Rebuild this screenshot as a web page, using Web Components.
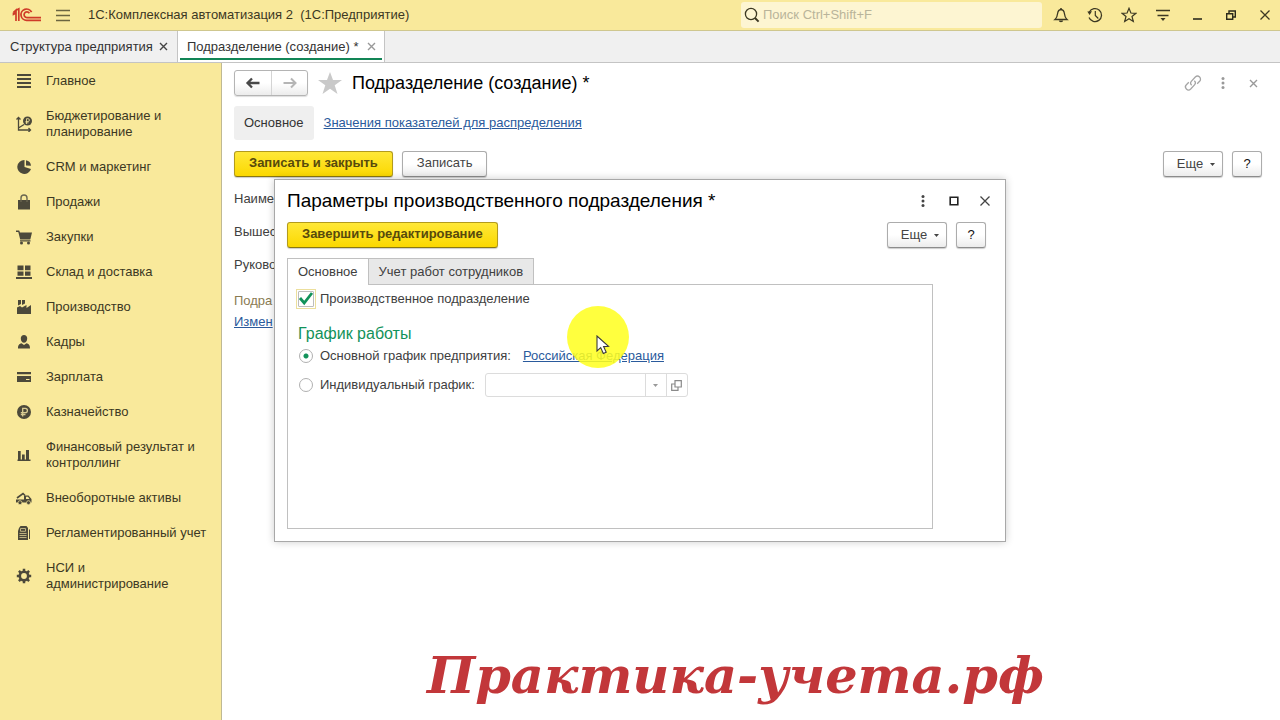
<!DOCTYPE html>
<html lang="ru">
<head>
<meta charset="utf-8">
<title>1С:Комплексная автоматизация 2</title>
<style>
  html, body { margin: 0; height: 100%; }
  body {
    font: 13px/16px "Liberation Sans", Arial, sans-serif;
    color: #404040; background: #fff; overflow: hidden;
    --accent: #f9e99b; --link: #2a5a9c; --green: #12925a; --line: #b8b8b8;
  }
</style>
</head>
<body>
<ka-app></ka-app>
<script>
const ICONS = {
  logo: [30, 16, '<g fill="none" stroke="#cf3b28" stroke-width="1.7"><path d="M1.500 5.500 4 3.200V14M4 3.200 6.800 1.800V14M1.500 5.500v1.800L4 6"/><path d="M19.600 5.200A5.600 5.600 0 1 0 15 13.300h14"/><path d="M17.400 6.200A2.900 2.900 0 1 0 15 10.700h14"/></g>'],
  burger: [16, 14, '<path d="M1 2.500h14M1 7.500h14M1 12.500h14" stroke="#6b6540" stroke-width="1.300"/>'],
  search: [16, 16, '<circle cx="7" cy="7" r="5.600" fill="none" stroke="#3c3823" stroke-width="1.300"/><path d="m11 11 3.600 3.600" stroke="#3c3823" stroke-width="2"/>'],
  bell: [16, 16, '<path d="M2 12.500c2-1.600 2.300-3.200 2.600-6C4.900 4 6 2.700 8 2.500c2 .2 3.100 1.500 3.400 4 .3 2.800.6 4.400 2.600 6z" fill="none" stroke="#3c3823" stroke-width="1.300"/><path d="M8 1v2" stroke="#3c3823" stroke-width="1.500"/><path d="M5.800 13.500h4.400a2.200 1.800 0 0 1-4.400 0z" fill="#3c3823"/>'],
  history: [16, 16, '<path d="M2.300 5A6.500 6.500 0 1 1 2 10.500" fill="none" stroke="#3c3823" stroke-width="1.300"/><path d="M.3 4.500 5 4.200 2.600 8z" fill="#3c3823"/><path d="M8.300 4v4.500l3 3" fill="none" stroke="#3c3823" stroke-width="1.200"/>'],
  starline: [16, 16, '<path d="m8 1.300 1.900 4.700 5 .3-3.900 3.200 1.300 5L8 11.800l-4.300 2.700 1.300-5L1.100 6.300l5-.3z" fill="none" stroke="#3c3823" stroke-width="1.200"/>'],
  service: [16, 16, '<path d="M1 3.500h14M2.500 8.500h11" stroke="#3c3823" stroke-width="1.300"/><path d="M5.500 11h5L8 14z" fill="#3c3823"/>'],
  min: [12, 12, '<path d="M2 10h9" stroke="#2c2a1c" stroke-width="1.600"/>'],
  restore: [12, 12, '<path d="M1.700 4.700h6v5.600h-6zM4 4.200V2h6.300v6H8" fill="none" stroke="#2c2a1c" stroke-width="1.400"/>'],
  cross: [12, 12, '<path d="m1.500 1.500 9 9m0-9-9 9" stroke="currentColor" stroke-width="1.300"/>'],
  tabcross: [9, 9, '<path d="m1 1 7 7m0-7-7 7" stroke="currentColor" stroke-width="1.400"/>'],
  square: [10, 10, '<path d="M1.200 1.200h7.600v7.600H1.200z" fill="none" stroke="#222" stroke-width="1.600"/>'],
  dots: [4, 14, '<g fill="currentColor"><circle cx="2" cy="2.500" r="1.500"/><circle cx="2" cy="7" r="1.500"/><circle cx="2" cy="11.500" r="1.500"/></g>'],
  chain: [18, 18, '<g fill="none" stroke="#a5a5a5" stroke-width="1.300"><path d="M7.700 11.300a3 3 0 0 1-.2-4.200L11.300 3a3 3 0 0 1 4.300 4.300l-2.400 2.500"/><path d="M10.300 6.700a3 3 0 0 1 .2 4.200L6.700 15a3 3 0 0 1-4.300-4.300l2.400-2.500"/></g>'],
  back: [16, 12, '<path d="M7 1.500 2.500 6 7 10.500M3 6h11.500" fill="none" stroke="#484848" stroke-width="2.300"/>'],
  forward: [16, 12, '<path d="M9 1.500 13.500 6 9 10.500M13 6H1.500" fill="none" stroke="#b5b5b5" stroke-width="2"/>'],
  star: [24, 22, '<path d="m12 0 3 8h9l-7.300 5.200L19.500 22 12 16.700 4.500 22l2.800-8.800L0 8h9z" fill="#c9c9c9"/>'],
  caret: [5, 3, '<path d="M0 0h5L2.500 3z" fill="currentColor"/>'],
  open: [11, 11, '<path d="M4 .7h6.300V7H4zM4 4H.7v6.300H7V7" fill="none" stroke="#8a8a8a" stroke-width="1.200"/>'],
  check: [16, 16, '<path d="m2 7 4.200 5L14 2" fill="none" stroke="#12925a" stroke-width="2.800"/>'],
  cursor: [14, 20, '<path d="M1 1v15l3.700-3.400 2.600 5.900 2.900-1.300-2.600-5.600 4.900-.3z" fill="#fff" stroke="#3a3a3a" stroke-width="1.100"/>'],
  main: [16, 16, '<path d="M1 2h14M1 6h14M1 10h14M1 14h14" stroke="#4c493a" stroke-width="2"/>'],
  budget: [16, 16, '<g fill="none" stroke="#4c493a" stroke-width="1.300"><path d="M2.500 1.500V14H14M.5 3.500l2-2 2 2M12.500 12l2 2-2 2M2.500 12 8 8.500"/></g><circle cx="11.500" cy="5" r="4.500" fill="#4c493a"/><path d="M10.500 8V2.700h1.500a1.400 1.400 0 0 1 0 2.800H9.500M9.500 6.800h3" fill="none" stroke="#f9e99b" stroke-width=".8"/>'],
  pie: [16, 16, '<path d="M8.500 8V1A7 7 0 1 0 15 10z" fill="#4c493a"/><path d="M10 6.500V1.200a6 6 0 0 1 5 5.500z" fill="#4c493a"/>'],
  bag: [16, 16, '<path d="M2 6h12v9.500H2z" fill="#4c493a"/><path d="M5 8V4a3 3 0 0 1 6 0v4" fill="none" stroke="#6b6750" stroke-width="1.400"/>'],
  cart: [16, 16, '<path d="M0 1.500h3.200L4 3.500h12l-1.700 7H4.200L2.300 3H0zM4 11.200h10.500v1.300H4z" fill="#4c493a"/><circle cx="5.500" cy="14" r="1.500" fill="#4c493a"/><circle cx="12.500" cy="14" r="1.500" fill="#4c493a"/>'],
  stock: [16, 16, '<path d="M1.500 1.500h6v4.700h-6zm7.500 0h5.500v4.700H9zM1.500 7.500h6v4.200h-6zm7.500 0h5.500v4.200H9zM0 13h16v2H0z" fill="#4c493a"/>'],
  factory: [16, 16, '<path d="M1 15V8.500l3-1.500 2 1.500L10.500 6v3L15 6v9zM2 1h3v4L2 6.500zM6 1h3v3.500L6 6z" fill="#4c493a"/>'],
  person: [16, 16, '<path d="M8 1a3.200 3.200 0 0 1 3.200 3.500C11.200 7 9.800 8.700 8 8.700S4.800 7 4.800 4.500A3.200 3.200 0 0 1 8 1zM2 14.500C2 11 3 10 5.500 9.200L8 11l2.500-1.800C13 10 14 11 14 14.500z" fill="#4c493a"/>'],
  card: [16, 16, '<path d="M1 3h14v2.300H1zM1 7h14v6H1z" fill="#4c493a"/><path d="M10 10.500h3.500" stroke="#f9e99b"/>'],
  ruble: [16, 16, '<circle cx="8" cy="8" r="7" fill="#4c493a"/><path d="M6.700 12.500V4.300h2.500a2.200 2.200 0 0 1 0 4.400H4.800M4.800 10.500h4.700" fill="none" stroke="#d9cc92" stroke-width="1.300"/>'],
  bars: [16, 16, '<path d="M2 4h2.700v9H2zM6 7.500h2.700V13H6zM10 3h3v10h-3zM1.500 12.500h13V14h-13z" fill="#4c493a"/>'],
  truck: [16, 16, '<path d="M0 9.500h8V5.500h4.500L15.500 9v3.500H0z" fill="#4c493a"/><path d="M10 6.700h2L13.500 9H10z" fill="#f9e99b"/><path d="m1 8 6-4.500 2 2" fill="none" stroke="#4c493a" stroke-width="1.600"/><g fill="#4c493a" stroke="#f9e99b" stroke-width=".7"><circle cx="4" cy="12.700" r="2"/><circle cx="12.500" cy="12.700" r="2"/></g>'],
  calc: [16, 16, '<path d="M3 3 4.500 1h6L12 3v12H2V6zM13 4.500h1V14h-1z" fill="#4c493a"/><path d="M4.500 3.500h5v2.800h-5zM3.500 8.500h7M3.500 10.500h7M3.500 12.500h7" fill="none" stroke="#d9cc92" stroke-width=".8"/>'],
  gear: [16, 16, '<circle cx="8" cy="8" r="4.200" fill="none" stroke="#4c493a" stroke-width="2.600"/><path d="M8 .8v2.700M8 12.500v2.700M.8 8h2.700M12.500 8h2.700M2.900 2.900l1.900 1.900M11.200 11.200l1.900 1.900M2.900 13.100l1.900-1.900M11.200 4.800l1.900-1.900" stroke="#4c493a" stroke-width="2.500"/>']
};

function define(name, html, setup) {
  const t = document.createElement('template');
  t.innerHTML = html;
  customElements.define(name, class extends HTMLElement {
    constructor() {
      super();
      this.attachShadow({ mode: 'open' }).append(t.content.cloneNode(true));
    }
    connectedCallback() {
      if (setup && !this.ready) { this.ready = true; setup(this, this.shadowRoot); }
    }
  });
}

/* Puts the host's icon in the place marked in its shadow root */
function placeIcon(el, root) {
  const icon = document.createElement('ka-icon');
  icon.setAttribute('name', el.getAttribute('icon'));
  root.querySelector('i').replaceWith(icon);
}

define('ka-icon', `<style>:host{display:inline-flex;flex:none}svg{display:block}</style>`, (el, root) => {
  const [w, h, body] = ICONS[el.getAttribute('name')];
  root.innerHTML += `<svg width="${w}" height="${h}" viewBox="0 0 ${w} ${h}" aria-hidden="true">${body}</svg>`;
});

/* Small frameless button that holds one icon */
define('ka-tool', `<style>
  :host{display:inline-flex;flex:none;color:#3c3823}
  button{display:flex;align-items:center;justify-content:center;width:20px;height:20px;padding:0;border:0;background:none;color:inherit}
</style><button type="button"><i></i></button>`, (el, root) => {
  root.querySelector('button').setAttribute('aria-label', el.getAttribute('label'));
  placeIcon(el, root);
});

define('ka-button', `<style>
  :host{display:inline-flex;flex:none}
  button{height:26px;padding:0 14px 2px;display:flex;align-items:center;justify-content:center;gap:7px;font:inherit;color:#444;
    border:1px solid #acacac;border-bottom-color:#8c8c8c;border-radius:3px;background:linear-gradient(#fff 50%,#ececec);box-shadow:0 1px 1px #0003}
  :host([primary]) button{font-weight:bold;color:#574a0c;border-color:#b39b1c;border-bottom-color:#8a7810;background:linear-gradient(#ffe838,#fbd800)}
  :host([square]) button{width:30px;padding:0;color:#111}
  :host([menu]) button{width:60px;padding:0 0 0 6px}
</style><button type="button"><slot></slot></button>`);

define('ka-titlebar', `<style>
  :host{display:flex;align-items:center;height:30px;padding:0 5px 0 12px;background:var(--accent);border-bottom:1px solid #cfc78f;color:#3c3823}
  .burger{margin-left:11px}
  .name{margin-left:15px;white-space:pre;flex:1}
  .search{display:flex;align-items:center;gap:3px;box-sizing:border-box;width:301px;height:26px;padding:0 3px;border-radius:3px;background:#fdf5d2}
  input{flex:1;min-width:0;border:0;padding:0;background:none;font:inherit;outline:0}
  input::placeholder{color:#b9b49a;opacity:1}
  .tools{display:flex;gap:14px;margin-left:9px}
</style>
<ka-icon name="logo"></ka-icon><ka-tool class="burger" icon="burger" label="Меню"></ka-tool>
<span class="name">1С:Комплексная автоматизация 2  (1С:Предприятие)</span>
<label class="search"><ka-icon name="search"></ka-icon><input type="text" aria-label="Поиск" placeholder="Поиск Ctrl+Shift+F"></label>
<div class="tools"><ka-tool icon="bell" label="Уведомления"></ka-tool><ka-tool icon="history" label="История"></ka-tool><ka-tool icon="starline" label="Избранное"></ka-tool><ka-tool icon="service" label="Сервис"></ka-tool><ka-tool icon="min" label="Свернуть"></ka-tool><ka-tool icon="restore" label="Восстановить"></ka-tool><ka-tool icon="cross" label="Закрыть"></ka-tool></div>`);

define('ka-tabs', `<style>
  :host{display:flex;height:31px;background:#f0f0f0;border-bottom:1px solid #c4c4c4}
  .tab{display:flex;align-items:center;gap:1px;padding:0 3px 0 10px;border-right:1px solid #c4c4c4}
  .tab ka-tool{color:#444}
  button.t{border:0;background:none;padding:0;font:inherit;color:#333}
  .active{gap:3px;padding:0 2px 0 9px;background:linear-gradient(#128556,#128556) 2px 27px/calc(100% - 4px) 2px no-repeat #fff}
  .active ka-tool{color:#999}
</style>
<div class="tab"><button class="t">Структура предприятия</button><ka-tool icon="tabcross" label="Закрыть вкладку"></ka-tool></div>
<div class="tab active"><button class="t">Подразделение (создание) *</button><ka-tool icon="tabcross" label="Закрыть вкладку"></ka-tool></div>`);

define('ka-nav-item', `<style>
  :host{display:block}
  a{display:flex;align-items:center;gap:14px;color:#3c3823;text-decoration:none}
</style><a href="#"><i></i><span><slot></slot></span></a>`, placeIcon);

define('ka-sidebar', `<style>
  :host{display:block;background:var(--accent);border-right:1px solid #bfb993}
  nav{display:flex;flex-direction:column;gap:19px;padding:10px 12px 10px 16px}
</style><nav>
<ka-nav-item icon="main">Главное</ka-nav-item>
<ka-nav-item icon="budget">Бюджетирование и планирование</ka-nav-item>
<ka-nav-item icon="pie">CRM и маркетинг</ka-nav-item>
<ka-nav-item icon="bag">Продажи</ka-nav-item>
<ka-nav-item icon="cart">Закупки</ka-nav-item>
<ka-nav-item icon="stock">Склад и доставка</ka-nav-item>
<ka-nav-item icon="factory">Производство</ka-nav-item>
<ka-nav-item icon="person">Кадры</ka-nav-item>
<ka-nav-item icon="card">Зарплата</ka-nav-item>
<ka-nav-item icon="ruble">Казначейство</ka-nav-item>
<ka-nav-item icon="bars">Финансовый результат и контроллинг</ka-nav-item>
<ka-nav-item icon="truck">Внеоборотные активы</ka-nav-item>
<ka-nav-item icon="calc">Регламентированный учет</ka-nav-item>
<ka-nav-item icon="gear">НСИ и<br>администрирование</ka-nav-item>
</nav>`);

define('ka-form', `<style>
  :host{display:block;padding:7px 18px 0 12px}
  .row{display:flex;align-items:center}
  .history{display:flex;box-sizing:border-box;height:26px;border:1px solid #b4b4b4;border-radius:3px;background:linear-gradient(#fff 50%,#ececec);box-shadow:0 1px 1px #0002}
  .history button{width:36px;padding:0;border:0;background:none;display:flex;align-items:center;justify-content:center}
  .history button+button{border-left:1px solid #d4d4d4}
  .fav{margin:0 10px}
  h1{margin:0;flex:1;font:18px/24px "Liberation Sans",Arial,sans-serif;color:#000}
  .tools{display:flex;gap:10px;margin-right:-1px}
  .tools ka-tool{color:#999}
  .sections{gap:10px;margin:10px 0 11px}
  .sections b{padding:9px 10px;border-radius:3px;background:#efefef;font-weight:normal;color:#333}
  a{color:var(--link)}
  .cmd{gap:9px}
  .space{flex:1}
  .fields{display:flex;flex-direction:column;gap:17px;margin:14px 0 20px}
  .sub{display:flex;flex-direction:column;align-items:flex-start;gap:5px}
  .sub span{color:#8a7b52}
</style>
<div class="row"><div class="history"><button aria-label="Назад"><ka-icon name="back"></ka-icon></button><button aria-label="Вперед"><ka-icon name="forward"></ka-icon></button></div>
<ka-icon class="fav" name="star"></ka-icon><h1>Подразделение (создание) *</h1>
<div class="tools"><ka-tool icon="chain" label="Ссылка"></ka-tool><ka-tool icon="dots" label="Меню"></ka-tool><ka-tool icon="tabcross" label="Закрыть"></ka-tool></div></div>
<div class="row sections"><b>Основное</b><a href="#">Значения показателей для распределения</a></div>
<div class="row cmd"><ka-button primary>Записать и закрыть</ka-button><ka-button>Записать</ka-button><span class="space"></span><ka-button menu>Еще <ka-icon name="caret"></ka-icon></ka-button><ka-button square>?</ka-button></div>
<div class="fields"><span>Наиме</span><span>Вышес</span><span>Руково</span></div>
<div class="sub"><span>Подра</span><a href="#">Измен</a></div>`);

define('ka-dialog', `<style>
  :host{display:block;box-sizing:border-box;padding:8px 11px 12px 12px;border:1px solid #a8a8a8;background:#fff;box-shadow:0 0 8px #0003}
  header,.cmd{display:flex;align-items:center}
  h2{margin:0;flex:1;font:19px/26px "Liberation Sans",Arial,sans-serif;color:#000}
  header div{display:flex;gap:11px;margin-right:-1px}
  header ka-tool{color:#444}
  .cmd{gap:9px;margin:8px 8px 10px 0}
  .space{flex:1}
  .tabs{display:flex}
  .tabs button{height:26px;padding:0 10px;border:1px solid #c0c0c0;border-bottom:0;border-left:0;background:#e8e8e8;font:inherit;color:#404040}
  .tabs button.on{height:27px;margin-bottom:-1px;border-left:1px solid #c0c0c0;background:#fff;position:relative}
  .panel{margin-right:61px;box-sizing:border-box;min-height:245px;border:1px solid #c0c0c0;padding:4px 8px}
  .opt{display:flex;align-items:center;height:20px}
  .box{display:grid;place-items:center;flex:none;width:20px;height:20px;margin-right:4px}
  .box>*{grid-area:1/1}
  .focus{box-sizing:border-box;border:1px solid #ecdf9c}
  input[type=checkbox]{appearance:none;margin:0;width:16px;height:16px;border:1px solid #bdbdbd;border-radius:1px}
  .box ka-icon{pointer-events:none;z-index:1}
  input[type=radio]{appearance:none;margin:0;width:14px;height:14px;border:1px solid #b0b0b0;border-radius:50%}
  input[type=radio]:checked{background:radial-gradient(circle,var(--green) 2px,transparent 3px)}
  h3{margin:15px 0 2px 2px;font:16px/20px "Liberation Sans",Arial,sans-serif;color:var(--green)}
  a{color:var(--link);margin-left:12px}
  .own{margin-top:9px}
  .pick{display:flex;box-sizing:border-box;width:203px;height:24px;margin-left:10px;border:1px solid #dcdcdc;border-radius:3px}
  .pick input{flex:1;min-width:0;border:0;padding:0 4px;background:none;font:inherit}
  .pick button{width:21px;padding:0;border:0;border-left:1px solid #dcdcdc;background:none;color:#999;display:flex;align-items:center;justify-content:center}
</style>
<header><h2>Параметры производственного подразделения *</h2><div><ka-tool icon="dots" label="Меню"></ka-tool><ka-tool icon="square" label="Развернуть"></ka-tool><ka-tool icon="cross" label="Закрыть"></ka-tool></div></header>
<div class="cmd"><ka-button primary>Завершить редактирование</ka-button><span class="space"></span><ka-button menu>Еще <ka-icon name="caret"></ka-icon></ka-button><ka-button square>?</ka-button></div>
<div class="tabs"><button class="on">Основное</button><button>Учет работ сотрудников</button></div>
<div class="panel">
  <div class="opt"><span class="box focus"><input type="checkbox" id="prod" checked><ka-icon name="check"></ka-icon></span><label for="prod">Производственное подразделение</label></div>
  <h3>График работы</h3>
  <div class="opt"><span class="box"><input type="radio" name="g" id="g1" checked></span><label for="g1">Основной график предприятия:</label><a href="#">Российская Федерация</a></div>
  <div class="opt own"><span class="box"><input type="radio" name="g" id="g2"></span><label for="g2">Индивидуальный график:</label><span class="pick"><input type="text" aria-label="Индивидуальный график"><button aria-label="Выбрать"><ka-icon name="caret"></ka-icon></button><button aria-label="Открыть"><ka-icon name="open"></ka-icon></button></span></div>
</div>`);

/* Mouse pointer with the highlight spot of the screen recorder */
define('ka-pointer', `<style>
  :host{display:grid;width:62px;height:62px;pointer-events:none}
  :host>*,.spot,ka-icon{grid-area:1/1}
  .spot{border-radius:50%;background:#ffff1e;opacity:.86}
  ka-icon{place-self:center;padding:16px 0 0 10px;z-index:1}
</style><span class="spot"></span><ka-icon name="cursor"></ka-icon>`);

define('ka-app', `<style>
  :host{display:grid;grid-template:auto auto 1fr/222px minmax(0,1fr);height:100%}
  ka-titlebar,ka-tabs{grid-column:1/3}
  main{position:relative}
  ka-dialog{position:absolute;left:52px;top:116px;width:732px}
  ka-pointer{position:absolute;left:345px;top:243px}
  .mark{position:absolute;left:205px;bottom:15px;font:italic bold 51px/60px "DejaVu Serif",serif;color:#c2373a;white-space:nowrap}
</style>
<ka-titlebar></ka-titlebar><ka-tabs></ka-tabs><ka-sidebar></ka-sidebar>
<main><ka-form></ka-form><ka-dialog role="dialog"></ka-dialog><ka-pointer></ka-pointer><div class="mark">Практика-учета.рф</div></main>`);
</script>
</body>
</html>
